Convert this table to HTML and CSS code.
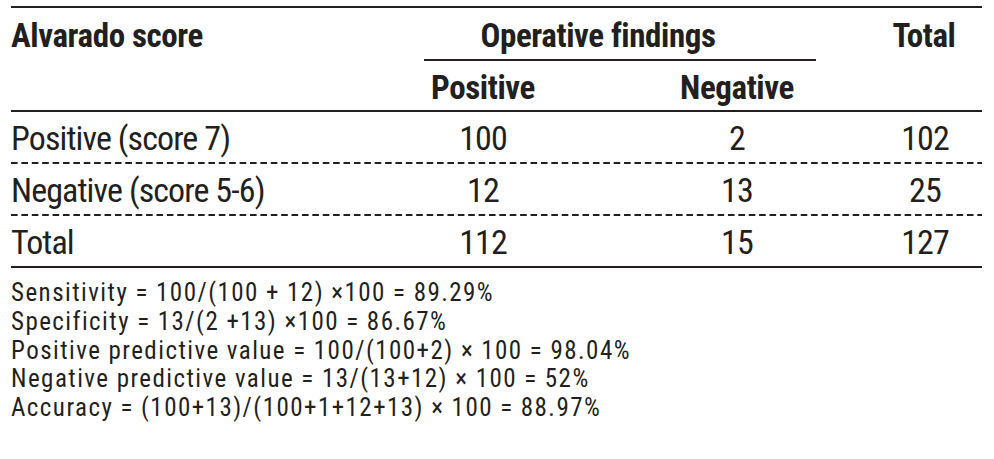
FILE: index.html
```html
<!DOCTYPE html>
<html>
<head>
<meta charset="utf-8">
<link rel="stylesheet" href="styles.css">
</head>
<body>
<div class="page">
  <div class="tbl">
    <div class="head grid">
      <div class="hc label">Alvarado score</div>
      <div class="hc span">Operative findings</div>
      <div class="hc total">Total</div>
      <div class="hc sub pos">Positive</div>
      <div class="hc sub neg">Negative</div>
    </div>
    <div class="row grid dashed">
      <div class="c label">Positive (score 7)</div>
      <div class="c c2">100</div>
      <div class="c c3">2</div>
      <div class="c c4">102</div>
    </div>
    <div class="row grid dashed">
      <div class="c label">Negative (score 5-6)</div>
      <div class="c c2">12</div>
      <div class="c c3">13</div>
      <div class="c c4">25</div>
    </div>
    <div class="row grid last">
      <div class="c label">Total</div>
      <div class="c c2">112</div>
      <div class="c c3">15</div>
      <div class="c c4">127</div>
    </div>
  </div>
  <div class="notes">
    <div class="note">Sensitivity = 100/(100 + 12) ×100 = 89.29%</div>
    <div class="note">Specificity = 13/(2 +13) ×100 = 86.67%</div>
    <div class="note">Positive predictive value = 100/(100+2) × 100 = 98.04%</div>
    <div class="note">Negative predictive value = 13/(13+12) × 100 = 52%</div>
    <div class="note">Accuracy = (100+13)/(100+1+12+13) × 100 = 88.97%</div>
  </div>
</div>
</body>
</html>
```

FILE: styles.css
```css
html, body {
  margin: 0;
  padding: 0;
  background: #ffffff;
}

.page {
  padding: 6px 0 0 11px;
  color: #231f20;
  font-family: "Roboto Condensed", "Noto Sans Display", sans-serif;
  font-stretch: condensed;
}

.tbl {
  width: 971px;
}

.grid {
  display: grid;
  grid-template-columns: 413px 118px 274px 166px;
}

.head {
  border-top: 2px solid #231f20;
  border-bottom: 2px solid #231f20;
  grid-template-rows: auto auto;
  font-weight: bold;
  font-size: 33px;
  line-height: 36px;
  letter-spacing: -0.4px;
}

.hc {
  text-align: center;
  white-space: nowrap;
}

.hc.label {
  grid-column: 1;
  grid-row: 1 / 3;
  text-align: left;
  padding-top: 10px;
}

.hc.span {
  grid-column: 2 / 4;
  grid-row: 1;
  padding: 10px 44px 5px 0;
  border-bottom: 2px solid #231f20;
}

.hc.total {
  grid-column: 4;
  grid-row: 1 / 3;
  padding: 10px 0 0 50px;
}

.hc.sub {
  grid-row: 2;
  padding: 9px 0 4px 0;
}

.hc.pos {
  grid-column: 2;
}

.hc.neg {
  grid-column: 3;
  padding-left: 116px;
}

.row {
  font-size: 34px;
  line-height: 40px;
  letter-spacing: -0.9px;
  padding: 6px 0 6px 0;
}

.row.dashed {
  background-image: linear-gradient(to right, #231f20 6.5px, transparent 6.5px);
  background-size: 10.4px 2px;
  background-repeat: repeat-x;
  background-position: left bottom;
}

.row.last {
  border-bottom: 2px solid #231f20;
  padding-bottom: 4px;
}

.c {
  text-align: center;
  white-space: nowrap;
}

.c.label {
  text-align: left;
}

.c.c3 {
  padding-left: 116px;
}

.c.c4 {
  padding-left: 52px;
}

.notes {
  margin-top: 11px;
  font-size: 25px;
  line-height: 28.8px;
  letter-spacing: 1.45px;
}

.note {
  white-space: nowrap;
}
```
